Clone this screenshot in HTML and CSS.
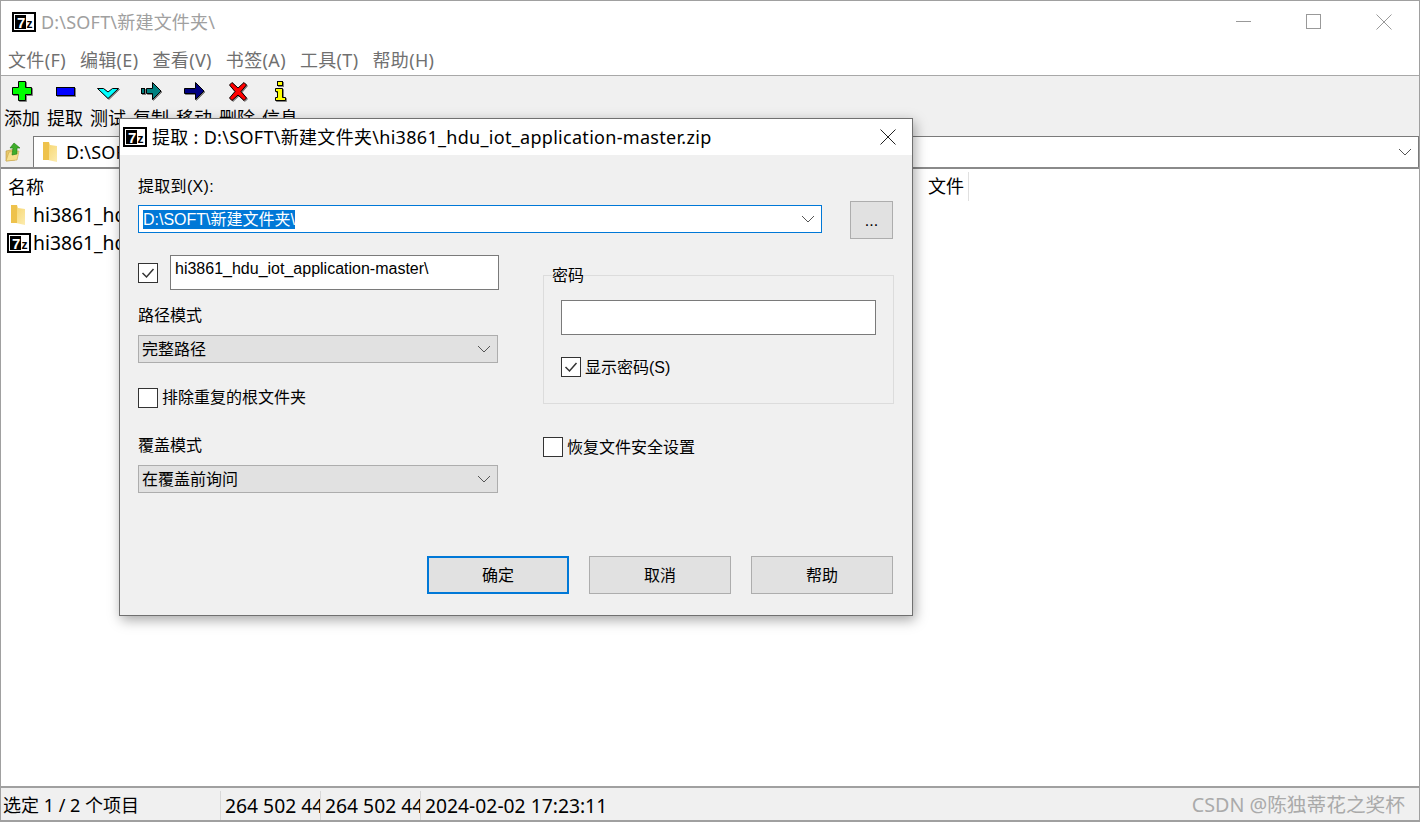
FILE: index.html
```html
<!DOCTYPE html>
<html lang="zh-CN">
<head>
    <meta charset="UTF-8">
    <title>D:\SOFT\新建文件夹\</title>
    <link rel="stylesheet" href="styles.css">
</head>
<body>
    <div class="window">
        <div class="titlebar">
            <svg class="logo" width="24" height="20" viewBox="0 0 24 20"><rect x="1" y="1" width="22" height="18" fill="#fff" stroke="#000" stroke-width="2"/><rect x="3" y="3" width="11" height="14" fill="#000"/><text x="5" y="15.5" class="logo-seven">7</text><text x="14.5" y="15.5" class="logo-z">z</text></svg>
            <span class="title">D:\SOFT\新建文件夹\</span>
            <div class="controls">
                <svg width="16" height="16" viewBox="0 0 16 16"><path d="M0 7.5H15" stroke="#999" fill="none"/></svg>
                <svg width="16" height="16" viewBox="0 0 16 16"><rect x="0.5" y="0.5" width="14" height="14" stroke="#999" fill="none"/></svg>
                <svg width="16" height="16" viewBox="0 0 16 16"><path d="M0.5 0.5L15.5 15.5M15.5 0.5L0.5 15.5" stroke="#999" fill="none"/></svg>
            </div>
        </div>

        <div class="menu">
            <span>文件(F)</span>
            <span>编辑(E)</span>
            <span>查看(V)</span>
            <span>书签(A)</span>
            <span>工具(T)</span>
            <span>帮助(H)</span>
        </div>

        <div class="toolbar">
            <div class="tool">
                <svg class="tool-icon" width="24" height="24" viewBox="0 0 24 24"><polygon points="8.5,2.5 15.5,2.5 15.5,8.5 21.5,8.5 21.5,15.5 15.5,15.5 15.5,21.5 8.5,21.5 8.5,15.5 2.5,15.5 2.5,8.5 8.5,8.5" fill="#00ff00" stroke="#000"/></svg>
                <span>添加</span>
            </div>
            <div class="tool">
                <svg class="tool-icon" width="24" height="24" viewBox="0 0 24 24"><rect x="3.5" y="8.5" width="18" height="8" fill="#0000ff" stroke="#000"/></svg>
                <span>提取</span>
            </div>
            <div class="tool">
                <svg class="tool-icon" width="24" height="24" viewBox="0 0 24 24"><polygon points="1.5,9.5 7.5,9.5 12,13 16.5,9.5 22.5,9.5 12,19.5" fill="#00ffff" stroke="#000"/></svg>
                <span>测试</span>
            </div>
            <div class="tool">
                <svg class="tool-icon" width="24" height="24" viewBox="0 0 24 24"><rect x="2.5" y="9.5" width="3" height="5" fill="#008080" stroke="#000"/><polygon points="7.5,9.5 13.5,9.5 13.5,3.5 22,12 13.5,20.5 13.5,14.5 7.5,14.5" fill="#008080" stroke="#000"/></svg>
                <span>复制</span>
            </div>
            <div class="tool">
                <svg class="tool-icon" width="24" height="24" viewBox="0 0 24 24"><polygon points="2.5,9.5 13.5,9.5 13.5,3.5 22,12 13.5,20.5 13.5,14.5 2.5,14.5" fill="#000080" stroke="#000"/></svg>
                <span>移动</span>
            </div>
            <div class="tool">
                <svg class="tool-icon" width="24" height="24" viewBox="0 0 24 24"><polygon points="7,3.5 13,9 19,3.5 21.5,6 16,12.5 21.5,19 19,21.5 13,16 7,21.5 4.5,19 10,12.5 4.5,6" fill="#ff0000" stroke="#000"/></svg>
                <span>删除</span>
            </div>
            <div class="tool">
                <svg class="tool-icon" width="24" height="24" viewBox="0 0 24 24"><rect x="9.5" y="2.5" width="5" height="4" fill="#ffff00" stroke="#000"/><polygon points="7.5,9.5 14.5,9.5 14.5,18.5 17.5,18.5 17.5,21.5 7.5,21.5 7.5,18.5 9.5,18.5 9.5,12.5 7.5,12.5" fill="#ffff00" stroke="#000"/></svg>
                <span>信息</span>
            </div>
        </div>

        <div class="address">
            <div class="up-btn">
                <svg width="18" height="20" viewBox="0 0 18 20"><polygon points="1,9 10,7 10,18 1,19" fill="#e8c868" stroke="#b59640" stroke-width="0.6"/><polygon points="4,10 14,9 12,18 1,19" fill="#f8e08c" stroke="#c9a64c" stroke-width="0.6"/><polygon points="9,1 15,6 12,6 12,12 7,13 8,6 5,6" fill="#3fae2a" stroke="#1f7a16" stroke-width="0.6"/></svg>
            </div>
            <div class="address-box">
                <svg class="folder" width="16" height="22" viewBox="0 0 16 22"><use href="#folder-shape"/></svg>
                <span class="address-text">D:\SOFT\新建文件夹\</span>
                <svg class="chevron" width="14" height="8" viewBox="0 0 14 8"><path d="M1 1L7 7L13 1" stroke="#555" fill="none"/></svg>
            </div>
        </div>

        <div class="list">
            <div class="list-head">
                <span class="col-name">名称</span>
                <span class="col-type">文件</span>
            </div>
            <div class="list-row">
                <svg class="row-folder" width="16" height="22" viewBox="0 0 16 22">
                    <defs>
                        <linearGradient id="folder-fill" x1="0" y1="0" x2="1" y2="1"><stop offset="0" stop-color="#f5d05f"/><stop offset="1" stop-color="#fcecb0"/></linearGradient>
                        <g id="folder-shape"><polygon points="1,1 7,1 8,4 15,5 15,21 6,19 1,19" fill="url(#folder-fill)"/><polygon points="1,1 7,1 7,19 1,19" fill="#eec24c"/></g>
                    </defs>
                    <use href="#folder-shape"/>
                </svg>
                <span>hi3861_hdu_iot_application-master</span>
            </div>
            <div class="list-row">
                <svg class="row-logo" width="24" height="20" viewBox="0 0 24 20"><rect x="1" y="1" width="22" height="18" fill="#fff" stroke="#000" stroke-width="2"/><rect x="3" y="3" width="11" height="14" fill="#000"/><text x="5" y="15.5" class="logo-seven">7</text><text x="14.5" y="15.5" class="logo-z">z</text></svg>
                <span>hi3861_hdu_iot_application-master.zip</span>
            </div>
        </div>

        <div class="statusbar">
            <span class="status-cell status-main">选定 1 / 2 个项目</span>
            <span class="status-cell status-size">264 502 44</span>
            <span class="status-cell status-size">264 502 44</span>
            <span class="status-cell status-date">2024-02-02 17:23:11</span>
            <span class="watermark">CSDN @陈独蒂花之奖杯</span>
        </div>
    </div>

    <div class="dialog">
        <div class="dialog-title">
            <svg class="logo" width="24" height="20" viewBox="0 0 24 20"><rect x="1" y="1" width="22" height="18" fill="#fff" stroke="#000" stroke-width="2"/><rect x="3" y="3" width="11" height="14" fill="#000"/><text x="5" y="15.5" class="logo-seven">7</text><text x="14.5" y="15.5" class="logo-z">z</text></svg>
            <span class="dialog-caption">提取 : D:\SOFT\新建文件夹\hi3861_hdu_iot_application-master.zip</span>
            <svg class="dialog-close" width="16" height="16" viewBox="0 0 16 16"><path d="M0.5 0.5L15.5 15.5M15.5 0.5L0.5 15.5" stroke="#222" fill="none"/></svg>
        </div>

        <div class="dialog-body">
            <div class="label label-path">提取到(X):</div>
            <div class="path-row">
                <div class="combo">
                    <span class="selected">D:\SOFT\新建文件夹\</span>
                    <svg class="chevron" width="14" height="8" viewBox="0 0 14 8"><path d="M1 1L7 7L13 1" stroke="#555" fill="none"/></svg>
                </div>
                <div class="btn btn-browse">...</div>
            </div>

            <div class="columns">
                <div>
                    <div class="name-row">
                        <span class="check">
                            <svg width="18" height="18" viewBox="0 0 18 18"><path d="M3.5 9L7.5 13L14.5 5" stroke="#333" stroke-width="1.5" fill="none"/></svg>
                        </span>
                        <div class="input input-name">hi3861_hdu_iot_application-master\</div>
                    </div>
                    <div class="label label-mode">路径模式</div>
                    <div class="select">
                        <span>完整路径</span>
                        <svg class="chevron" width="14" height="8" viewBox="0 0 14 8"><path d="M1 1L7 7L13 1" stroke="#555" fill="none"/></svg>
                    </div>
                    <div class="check-row check-row-gap">
                        <span class="check"></span>
                        <span class="check-text check-text-up">排除重复的根文件夹</span>
                    </div>
                    <div class="label label-over">覆盖模式</div>
                    <div class="select">
                        <span>在覆盖前询问</span>
                        <svg class="chevron" width="14" height="8" viewBox="0 0 14 8"><path d="M1 1L7 7L13 1" stroke="#555" fill="none"/></svg>
                    </div>
                </div>

                <div>
                    <fieldset class="group">
                        <legend>密码</legend>
                        <div class="input input-pass"></div>
                        <div class="check-row check-row-pass">
                            <span class="check">
                                <svg width="18" height="18" viewBox="0 0 18 18"><path d="M3.5 9L7.5 13L14.5 5" stroke="#333" stroke-width="1.5" fill="none"/></svg>
                            </span>
                            <span class="check-text">显示密码(S)</span>
                        </div>
                    </fieldset>
                    <div class="check-row check-row-restore">
                        <span class="check"></span>
                        <span class="check-text">恢复文件安全设置</span>
                    </div>
                </div>
            </div>

            <div class="buttons">
                <div class="btn btn-default">确定</div>
                <div class="btn">取消</div>
                <div class="btn">帮助</div>
            </div>
        </div>
    </div>
</body>
</html>
```

FILE: styles.css
```css
* {
    box-sizing: border-box;
}

body {
    margin: 0;
    overflow: hidden;
    background: #fff;
    color: #000;
    font-family: "Noto Sans", "Noto Sans CJK SC", sans-serif;
    font-size: 18px;
}

/* main window */
.window {
    width: 1420px;
    height: 822px;
    border: 1px solid #a0a0a0;
    border-bottom-width: 2px;
    display: flex;
    flex-direction: column;
}

.titlebar {
    height: 43px;
    flex: none;
    display: flex;
    align-items: center;
    padding: 0 0 1px 11px;
    background: #fff;
}

.logo {
    flex: none;
}

.logo-seven {
    fill: #fff;
    font: bold 15px "Liberation Sans", sans-serif;
}

.logo-z {
    fill: #000;
    font: bold 12px "Liberation Sans", sans-serif;
}

.title {
    margin-left: 5px;
    color: #a0a0a0;
    line-height: 24px;
    letter-spacing: 0.2px;
}

.controls {
    margin-left: auto;
    padding-right: 27px;
    display: flex;
    gap: 54px;
}

.menu {
    height: 32px;
    flex: none;
    display: flex;
    gap: 14px;
    align-items: center;
    padding: 0 0 2px 7px;
    color: #707070;
    background: #fff;
    border-bottom: 1px solid #a8a8a8;
    letter-spacing: 0.35px;
}

.toolbar {
    height: 60px;
    flex: none;
    display: flex;
    gap: 7px;
    padding: 3px 0 0 3px;
    background: #f0f0f0;
    overflow: hidden;
}

.tool {
    width: 36px;
    display: flex;
    flex-direction: column;
    align-items: center;
    line-height: 24px;
}

.tool-icon {
    flex: none;
    margin-bottom: 3px;
    filter: drop-shadow(1px 1px 0 #808080);
}

.address {
    height: 33px;
    flex: none;
    display: flex;
    background: #f0f0f0;
    border-bottom: 2px solid #8a8a8a;
}

.up-btn {
    width: 32px;
    padding: 6px 0 0 4px;
}

.address-box {
    flex: 1;
    display: flex;
    align-items: center;
    padding-left: 8px;
    border: 1px solid #7a7a7a;
    border-bottom: none;
    background: #fff;
}

.address-text {
    margin-left: 8px;
    line-height: 24px;
    letter-spacing: 0.2px;
}

.chevron {
    flex: none;
    margin-left: auto;
}

.address-box .chevron {
    margin-right: 6px;
}

.list {
    flex: 1;
    background: #fff;
    border-bottom: 2px solid #a0a0a0;
}

.list-head {
    height: 32px;
    display: flex;
    align-items: center;
    padding: 2px 0 0 7px;
}

.col-name {
    width: 920px;
}

.col-type {
    width: 41px;
    height: 29px;
    line-height: 29px;
    border-right: 1px solid #e0e0e0;
}

.list-row {
    height: 28px;
    display: flex;
    align-items: center;
    white-space: nowrap;
    line-height: 24px;
    font-size: 19.3px;
}

.row-folder {
    margin: 0 7px 0 9px;
}

.row-logo {
    margin: 0 2px 0 6px;
}

.statusbar {
    height: 32px;
    flex: none;
    display: flex;
    align-items: center;
    padding-top: 2px;
    background: #f0f0f0;
}

.status-cell {
    height: 29px;
    line-height: 29px;
    padding-left: 4px;
    white-space: nowrap;
    overflow: hidden;
}

.status-main {
    width: 220px;
    padding-left: 2px;
    border-right: 1px solid #d8d8d8;
}

.status-size {
    width: 100px;
    font-size: 19.3px;
    border-right: 1px solid #d8d8d8;
}

.status-date {
    font-size: 19.3px;
}

.watermark {
    margin: 0 0 4px auto;
    padding-right: 14px;
    color: #aaa;
    font-size: 19.7px;
}

/* extract dialog */
.dialog {
    position: absolute;
    top: 118px;
    left: 119px;
    width: 794px;
    height: 498px;
    display: flex;
    flex-direction: column;
    border: 1px solid #707070;
    background: #f0f0f0;
    box-shadow: 2px 4px 12px rgba(0, 0, 0, 0.35);
    font-family: "Liberation Sans", "Noto Sans CJK SC", sans-serif;
    font-size: 16px;
}

.dialog-title {
    height: 36px;
    flex: none;
    display: flex;
    align-items: center;
    padding: 0 16px 0 3px;
    background: #fff;
}

.dialog-caption {
    margin-left: 5px;
    font-family: "Noto Sans", "Noto Sans CJK SC", sans-serif;
    font-size: 18px;
    line-height: 24px;
    letter-spacing: 0.3px;
}

.dialog-close {
    margin-left: auto;
}

.dialog-body {
    flex: 1;
    display: flex;
    flex-direction: column;
    padding: 19px 19px 21px 18px;
}

.label {
    height: 24px;
    line-height: 26px;
}

.label-path {
    letter-spacing: 0.3px;
}

.path-row {
    margin-top: 3px;
    height: 38px;
    display: flex;
    align-items: center;
    gap: 28px;
}

.combo {
    width: 684px;
    height: 28px;
    margin-bottom: 2px;
    display: flex;
    align-items: center;
    padding: 0 6px 0 4px;
    background: #fff;
    border: 1px solid #0078d7;
}

.selected {
    background: #0078d7;
    color: #fff;
    line-height: 19px;
}

.btn {
    width: 142px;
    height: 38px;
    line-height: 38px;
    text-align: center;
    background: #e1e1e1;
    border: 1px solid #adadad;
}

.btn-browse {
    width: 43px;
}

.btn-default {
    border: 2px solid #0078d7;
    line-height: 36px;
}

.columns {
    margin-top: 16px;
    display: grid;
    grid-template-columns: 361px 351px;
    gap: 44px;
}

.name-row {
    height: 35px;
    display: flex;
    align-items: center;
    gap: 12px;
}

.check {
    width: 20px;
    height: 20px;
    flex: none;
    border: 1px solid #333;
    background: #fff;
    display: block;
}

.check svg {
    display: block;
    margin: 0;
}

.input {
    border: 1px solid #7a7a7a;
    background: #fff;
}

.input-name {
    width: 329px;
    height: 35px;
    padding-left: 4px;
    line-height: 26px;
}

.label-mode {
    margin-top: 13px;
}

.label-over {
    margin-top: 25px;
}

.select {
    width: 360px;
    height: 28px;
    margin-top: 8px;
    display: flex;
    align-items: center;
    padding: 0 6px 2px 3px;
    background: #e1e1e1;
    border: 1px solid #adadad;
}

.select .chevron {
    margin-top: 2px;
}

.check-row {
    height: 20px;
    display: flex;
    align-items: center;
    gap: 4px;
}

.check-text {
    padding-bottom: 2px;
}

.check-text-up {
    padding-bottom: 4px;
}

.check-row-gap {
    margin-top: 25px;
}

.group {
    margin: 8px 0 0;
    padding: 0 17px;
    height: 141px;
    border: 1px solid #dcdcdc;
}

.group legend {
    margin-left: -9px;
    padding: 0;
    height: 24px;
    line-height: 26px;
}

.input-pass {
    width: 315px;
    height: 35px;
    margin-top: 13px;
}

.check-row-pass {
    margin-top: 22px;
}

.check-row-restore {
    margin-top: 33px;
}

.buttons {
    margin-top: auto;
    display: flex;
    justify-content: flex-end;
    gap: 20px;
}
```
